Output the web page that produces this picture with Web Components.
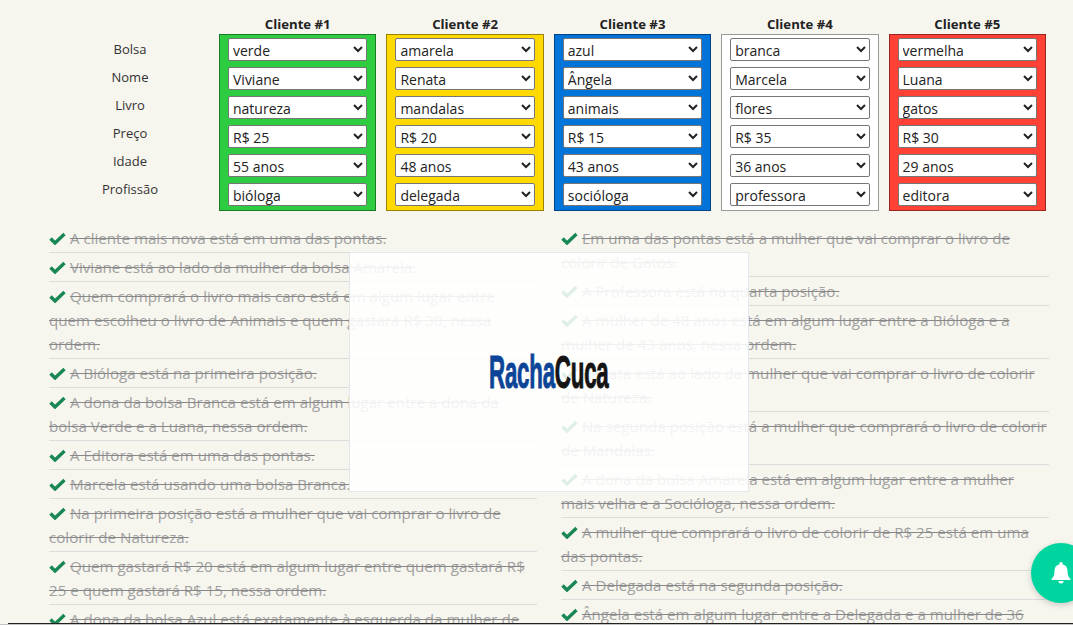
<!DOCTYPE html>
<html lang="pt-BR">
<head>
<meta charset="utf-8">
<title>Racha Cuca</title>
<style>
  html, body { margin: 0; padding: 0; background: #f6f5ee; overflow: hidden; }
  body { font-family: "Open Sans", "Liberation Sans", sans-serif; font-size: 15px; color: #333; }
</style>
</head>
<body>
<puzzle-page>
  <client-grid slot="grid"></client-grid>
  <clue-list slot="left">
    <clue-item>A cliente mais nova está em uma das pontas.</clue-item>
    <clue-item>Viviane está ao lado da mulher da bolsa Amarela.</clue-item>
    <clue-item>Quem comprará o livro mais caro está em algum lugar entre quem escolheu o livro de Animais e quem gastará R$ 30, nessa ordem.</clue-item>
    <clue-item>A Bióloga está na primeira posição.</clue-item>
    <clue-item>A dona da bolsa Branca está em algum lugar entre a dona da bolsa Verde e a Luana, nessa ordem.</clue-item>
    <clue-item>A Editora está em uma das pontas.</clue-item>
    <clue-item>Marcela está usando uma bolsa Branca.</clue-item>
    <clue-item>Na primeira posição está a mulher que vai comprar o livro de colorir de Natureza.</clue-item>
    <clue-item>Quem gastará R$ 20 está em algum lugar entre quem gastará R$ 25 e quem gastará R$ 15, nessa ordem.</clue-item>
    <clue-item>A dona da bolsa Azul está exatamente à esquerda da mulher de</clue-item>
  </clue-list>
  <clue-list slot="right">
    <clue-item>Em uma das pontas está a mulher que vai comprar o livro de colorir de Gatos.</clue-item>
    <clue-item>A Professora está na quarta posição.</clue-item>
    <clue-item>A mulher de 48 anos está em algum lugar entre a Bióloga e a mulher de 43 anos, nessa ordem.</clue-item>
    <clue-item>Renata está ao lado da mulher que vai comprar o livro de colorir de Natureza.</clue-item>
    <clue-item>Na segunda posição está a mulher que comprará o livro de colorir de Mandalas.</clue-item>
    <clue-item>A dona da bolsa Amarela está em algum lugar entre a mulher mais velha e a Socióloga, nessa ordem.</clue-item>
    <clue-item>A mulher que comprará o livro de colorir de R$ 25 está em uma das pontas.</clue-item>
    <clue-item>A Delegada está na segunda posição.</clue-item>
    <clue-item>Ângela está em algum lugar entre a Delegada e a mulher de 36</clue-item>
  </clue-list>
  <logo-overlay slot="overlay"></logo-overlay>
  <notify-fab slot="overlay"></notify-fab>
</puzzle-page>

<script>
// dados do quebra-cabeça
const ROW_LABELS = ['Bolsa', 'Nome', 'Livro', 'Preço', 'Idade', 'Profissão'];
const CLIENTS = [
  { color: '#2ecc40', values: ['verde', 'Viviane', 'natureza', 'R$ 25', '55 anos', 'bióloga'] },
  { color: '#ffd900', values: ['amarela', 'Renata', 'mandalas', 'R$ 20', '48 anos', 'delegada'] },
  { color: '#0074d9', values: ['azul', 'Ângela', 'animais', 'R$ 15', '43 anos', 'socióloga'] },
  { color: '#ffffff', values: ['branca', 'Marcela', 'flores', 'R$ 35', '36 anos', 'professora'] },
  { color: '#ff4136', values: ['vermelha', 'Luana', 'gatos', 'R$ 30', '29 anos', 'editora'] }
];

class PuzzlePage extends HTMLElement {
  constructor() {
    super();
    this.attachShadow({ mode: 'open' });
    this.shadowRoot.innerHTML = `
      <style>
        :host { display: block; position: relative; width: 1073px; height: 625px; overflow: hidden; box-sizing: border-box; border-bottom: 1px solid #c4c4c4; }
        .lists { display: grid; grid-template-columns: 488px 488px; column-gap: 24px; margin: 13px 0 0 49px; }
        .rule { position: absolute; left: 8px; right: 0; bottom: 0; height: 1px; background: #222; }
      </style>
      <slot name="grid"></slot>
      <div class="lists">
        <slot name="left"></slot>
        <slot name="right"></slot>
      </div>
      <div class="rule"></div>
      <slot name="overlay"></slot>
    `;
  }
}

class ClientGrid extends HTMLElement {
  constructor() {
    super();
    this.attachShadow({ mode: 'open' });
    const labels = ROW_LABELS.map(l => `<div class="label">${l}</div>`).join('');
    const cards = CLIENTS.map((c, i) => `
      <div class="col">
        <div class="head">Cliente #${i + 1}</div>
        <client-card color="${c.color}" values="${c.values.join('|')}"></client-card>
      </div>`).join('');
    this.shadowRoot.innerHTML = `
      <style>
        :host { display: flex; padding: 14px 0 0 41px; }
        .labels { width: 178px; padding-top: 21px; flex: none; }
        .label { height: 28px; line-height: 28px; text-align: center; font-size: 13px; color: #333; }
        .cols { display: grid; grid-template-columns: repeat(5, 157.4px); column-gap: 10px; }
        .head { height: 20px; line-height: 20px; text-align: center; font-weight: 700; font-size: 13.2px; color: #222; }
      </style>
      <div class="labels">${labels}</div>
      <div class="cols">${cards}</div>
    `;
  }
}

class ClientCard extends HTMLElement {
  constructor() {
    super();
    this.attachShadow({ mode: 'open' });
  }
  connectedCallback() {
    const values = (this.getAttribute('values') || '').split('|');
    this.shadowRoot.innerHTML = `
      <style>
        :host { display: block; box-sizing: border-box; height: 177px; padding: 3px 8px 0 8px; border: 1px solid rgba(0,0,0,.4); background: ${this.getAttribute('color')}; }
        .stack { display: flex; flex-direction: column; gap: 6px; }
        select { display: block; width: 100%; height: 23px; box-sizing: border-box; margin: 0; padding: 1px 0 0 0; font: 14px "Open Sans", "Liberation Sans", sans-serif; color: #222; background: #fff; border: 1px solid #767676; border-radius: 2px; }
      </style>
      <div class="stack">
        ${values.map(v => `<select><option>${v}</option></select>`).join('')}
      </div>
    `;
  }
}

class ClueList extends HTMLElement {
  constructor() {
    super();
    this.attachShadow({ mode: 'open' });
    this.shadowRoot.innerHTML = `
      <style>:host { display: block; }</style>
      <slot></slot>
    `;
  }
}

class ClueItem extends HTMLElement {
  constructor() {
    super();
    this.attachShadow({ mode: 'open' });
    this.shadowRoot.innerHTML = `
      <style>
        :host { display: block; box-sizing: border-box; padding: 2px 0; border-bottom: 1px solid #dcdcdc; line-height: 24px; font-size: 15.14px; color: #a0a0a0; }
        svg { width: 17px; height: 13px; vertical-align: -1px; }
        .txt { text-decoration: line-through; text-decoration-color: #888; }
      </style>
      <svg viewBox="0 0 17 13"><path d="M1.500 6.500 L6 11 L15.500 2" fill="none" stroke="#198754" stroke-width="3.400"/></svg>
      <span class="txt"><slot></slot></span>
    `;
  }
}

class LogoOverlay extends HTMLElement {
  constructor() {
    super();
    this.attachShadow({ mode: 'open' });
    this.shadowRoot.innerHTML = `
      <style>
        :host { position: absolute; left: 349px; top: 252px; width: 400px; height: 240px; box-sizing: border-box; display: flex; align-items: center; justify-content: center; background: rgba(255,255,255,.87); border: 1px solid #e4e7ee; }
        .logo { display: flex; font: 700 47px/48px "Liberation Sans", sans-serif; transform: scaleX(.475); letter-spacing: -.5px; -webkit-text-stroke: 1px currentColor; }
        .a { color: #0c4497; }
        .b { color: #141414; }
      </style>
      <div class="logo"><span class="a">Racha</span><span class="b">Cuca</span></div>
    `;
  }
}

class NotifyFab extends HTMLElement {
  constructor() {
    super();
    this.attachShadow({ mode: 'open' });
    this.shadowRoot.innerHTML = `
      <style>
        :host { position: absolute; left: 1031px; top: 543px; width: 60px; height: 60px; border-radius: 50%; background: #00d5a0; box-shadow: 0 2px 6px rgba(0,0,0,.18); display: flex; align-items: center; justify-content: center; }
        svg { width: 20px; height: 22px; }
      </style>
      <svg viewBox="0 0 20 22"><path fill="#fff" d="M10 0a1.6 1.6 0 0 1 1.6 1.6v.6C14.800 3 16.500 5.500 16.500 8.500c0 4.500 1 6.500 3 8.500v1H.5v-1c2-2 3-4 3-8.500 0-3 1.700-5.500 4.900-6.300v-.6A1.600 1.600 0 0 1 10 0zM7.500 19h5a2.500 2.500 0 0 1-5 0z"/></svg>
    `;
  }
}

customElements.define('puzzle-page', PuzzlePage);
customElements.define('client-grid', ClientGrid);
customElements.define('client-card', ClientCard);
customElements.define('clue-list', ClueList);
customElements.define('clue-item', ClueItem);
customElements.define('logo-overlay', LogoOverlay);
customElements.define('notify-fab', NotifyFab);
</script>
</body>
</html>
